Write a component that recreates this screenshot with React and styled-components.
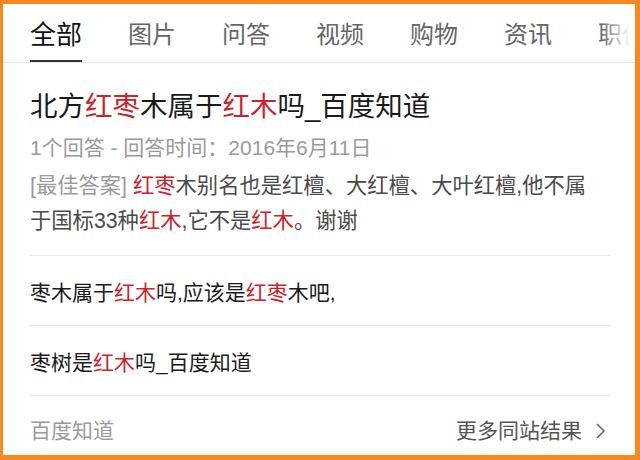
import React from "react";
import styled, { createGlobalStyle } from "styled-components";

const GlobalStyle = createGlobalStyle`
  html, body {
    margin: 0;
    padding: 0;
    background: #fff;
  }
  body {
    font-family: "Liberation Sans", "Noto Sans CJK SC", sans-serif;
  }
`;

const Frame = styled.div`
  box-sizing: border-box;
  width: 640px;
  height: 460px;
  border-style: solid;
  border-color: #f7891f;
  border-width: 4px 5px 5px 3px;
  background: #fff;
  display: flex;
  flex-direction: column;
  overflow: hidden;
`;

const TabBar = styled.div`
  position: relative;
  display: flex;
  gap: 46px;
  height: 58px;
  padding-left: 27px;
  border-bottom: 1px solid #e6e6e6;
  white-space: nowrap;
  overflow: hidden;
`;

const Tab = styled.div`
  box-sizing: border-box;
  height: 59px;
  margin-bottom: -1px;
  display: flex;
  align-items: center;
  flex-shrink: 0;
  font-size: ${(p) => (p.$active ? "26px" : "24px")};
  color: ${(p) => (p.$active ? "#111" : "#666")};
  border-bottom: 3px solid ${(p) => (p.$active ? "#333" : "transparent")};
`;

const Fade = styled.div`
  position: absolute;
  right: 0;
  top: 0;
  bottom: 0;
  width: 34px;
  background: linear-gradient(to right, rgba(255, 255, 255, 0), #fff 85%);
`;

const Card = styled.div`
  flex: 1;
  display: flex;
  flex-direction: column;
  padding: 0 25px 0 27px;
`;

const Title = styled.div`
  margin-top: 26px;
  font-size: 27.5px;
  line-height: 36px;
  color: #1a1a1a;
`;

const Red = styled.span`
  color: #c9232b;
`;

const Meta = styled.div`
  margin-top: 8px;
  font-size: 21px;
  line-height: 30px;
  color: #9a9a9a;
`;

const Snippet = styled.div`
  margin-top: 6px;
  padding-bottom: 16px;
  font-size: 21.3px;
  line-height: 35px;
  color: #4a4a4a;
  border-bottom: 1px solid #e8e8e8;
`;

const Label = styled.span`
  color: #9a9a9a;
`;

const Row = styled.div`
  height: 69px;
  display: flex;
  align-items: center;
  font-size: 21px;
  color: #1a1a1a;
  border-bottom: 1px solid #e8e8e8;
`;

const Footer = styled.div`
  display: flex;
  justify-content: space-between;
  align-items: center;
  padding-top: 22px;
  line-height: 26px;
  font-size: 21px;
`;

const Source = styled.span`
  color: #9a9a9a;
`;

const More = styled.span`
  display: flex;
  align-items: center;
  gap: 13px;
  padding-right: 4px;
  color: #555;
`;

const tabs = ["全部", "图片", "问答", "视频", "购物", "资讯", "职位"];

export default function App() {
  return (
    <>
      <GlobalStyle />
      <Frame>
        <TabBar>
          {tabs.map((t, i) => (
            <Tab key={t} $active={i === 0}>
              {t}
            </Tab>
          ))}
          <Fade />
        </TabBar>
        <Card>
          <Title>
            北方<Red>红枣</Red>木属于<Red>红木</Red>吗_百度知道
          </Title>
          <Meta>1个回答 - 回答时间：2016年6月11日</Meta>
          <Snippet>
            <Label>[最佳答案]</Label> <Red>红枣</Red>木别名也是红檀、大红檀、大叶红檀,他不属
            <br />
            于国标33种<Red>红木</Red>,它不是<Red>红木</Red>。谢谢
          </Snippet>
          <Row>
            枣木属于<Red>红木</Red>吗,应该是<Red>红枣</Red>木吧,
          </Row>
          <Row>
            枣树是<Red>红木</Red>吗_百度知道
          </Row>
          <Footer>
            <Source>百度知道</Source>
            <More>
              更多同站结果
              <svg width="11" height="18" viewBox="0 0 11 18">
                <polyline
                  points="2,2 9,9 2,16"
                  fill="none"
                  stroke="#666"
                  strokeWidth="1.6"
                />
              </svg>
            </More>
          </Footer>
        </Card>
      </Frame>
    </>
  );
}
